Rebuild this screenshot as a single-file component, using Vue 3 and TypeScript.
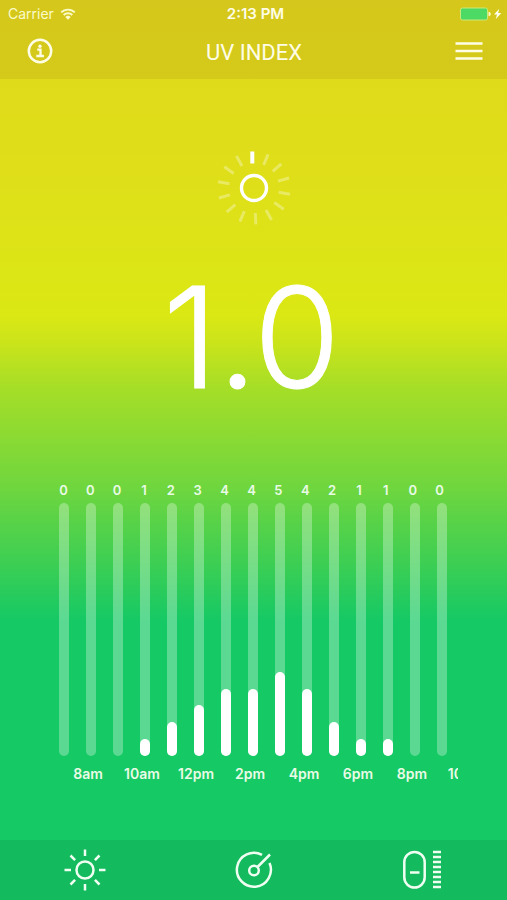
<script setup lang="ts">
interface Ray {
  angle: number
  active: boolean
}

const values: number[] = [0, 0, 0, 1, 2, 3, 4, 4, 5, 4, 2, 1, 1, 0, 0]
const hours: string[] = ['8am', '10am', '12pm', '2pm', '4pm', '6pm', '8pm', '10pm']
const maxIndex = 15

const rays: Ray[] = Array.from({ length: 14 }, (_, i) => ({
  angle: i === 0 ? 0 : -3 + (i * 360) / 14,
  active: i === 0,
}))

const sunAngles: number[] = [0, 45, 90, 135, 180, 225, 270, 315]
const scaleMarks: number[] = Array.from({ length: 8 }, (_, i) => 2 + i * 5)

function fillHeight(value: number): string {
  return `${(value / maxIndex) * 100}%`
}
</script>

<template>
  <div class="screen">
    <header class="top">
      <div class="status">
        <div class="carrier">
          <span>Carrier</span>
          <svg width="16" height="12" viewBox="0 0 16 12" aria-hidden="true">
            <g fill="none" stroke="currentColor" stroke-width="1.9">
              <path d="M1.2 4.4a9.6 9.6 0 0 1 13.6 0" />
              <path d="M3.7 7a6.1 6.1 0 0 1 8.6 0" />
            </g>
            <path d="M8 11.8 5.3 9.1a3.8 3.8 0 0 1 5.4 0z" fill="currentColor" />
          </svg>
        </div>
        <span class="time">2:13 PM</span>
        <svg class="battery" width="44" height="14" viewBox="0 0 44 14" aria-hidden="true">
          <rect x="1.5" y="1" width="27" height="12" rx="2" fill="#4cd964" stroke="#c9ea78" />
          <path d="M29.5 4.8v4.4q2.4-.4 2.400-2.200t-2.400-2.200z" fill="#fbfbc9" />
          <path d="M40.3 1.8 35 7.600h3L36.700 12.200l5.600-6.200h-3.200z" fill="#fffff0" />
        </svg>
      </div>
      <nav class="bar">
        <button type="button" aria-label="Information">
          <svg width="26" height="26" viewBox="0 0 26 26" aria-hidden="true">
            <circle cx="13" cy="13" r="11.2" fill="none" stroke="currentColor" stroke-width="2.5" />
            <circle cx="13" cy="8.2" r="1.7" fill="currentColor" />
            <path d="M10.3 11.700h3.200v6M9.300 18h7.600" fill="none" stroke="currentColor" stroke-width="2.3" />
          </svg>
        </button>
        <h1>UV INDEX</h1>
        <button type="button" aria-label="Menu">
          <svg width="28" height="20" viewBox="0 0 28 20" aria-hidden="true">
            <path d="M.5 2.500h27M.5 10h27M.5 17.500h27" stroke="currentColor" stroke-width="2.7" />
          </svg>
        </button>
      </nav>
    </header>

    <main>
      <section class="current">
        <svg width="76" height="76" viewBox="0 0 76 76" aria-hidden="true">
          <circle cx="38" cy="38" r="12.5" fill="none" stroke="#fff" stroke-width="3.4" />
          <path
            v-for="ray in rays"
            :key="ray.angle"
            :class="['ray', { active: ray.active }]"
            :d="ray.active ? 'M36.3 13.5V1.5' : 'M38 13V1.5'"
            :transform="`rotate(${ray.angle} 38 38)`"
          />
        </svg>
        <p class="reading">1.0</p>
      </section>

      <section class="chart" aria-label="UV index by hour">
        <div class="values">
          <span v-for="(value, i) in values" :key="i">{{ value }}</span>
        </div>
        <div class="tracks">
          <div v-for="(value, i) in values" :key="i" class="track">
            <div class="fill" :style="{ height: fillHeight(value) }"></div>
          </div>
        </div>
        <div class="hours">
          <span v-for="hour in hours" :key="hour">{{ hour }}</span>
        </div>
      </section>
    </main>

    <footer class="tabs">
      <button type="button" aria-label="UV index">
        <svg width="42" height="42" viewBox="0 0 42 42" aria-hidden="true">
          <circle cx="21" cy="21" r="8.5" />
          <path v-for="angle in sunAngles" :key="angle" d="M21 7V.5" :transform="`rotate(${angle} 21 21)`" />
        </svg>
      </button>
      <button type="button" aria-label="Exposure">
        <svg width="38" height="38" viewBox="0 0 38 38" aria-hidden="true">
          <path d="M27 3.800A17 17 0 1 0 34.500 12" />
          <circle cx="19" cy="19.5" r="4.8" />
          <path d="M22.5 16 35 3.5" />
        </svg>
      </button>
      <button type="button" aria-label="Device">
        <svg width="42" height="40" viewBox="0 0 42 40" aria-hidden="true">
          <rect x="2.3" y="2" width="20.4" height="35.5" rx="10.2" />
          <path d="M8 22.5h9.5" />
          <path v-for="y in scaleMarks" :key="y" :d="`M31 ${y}h8`" />
        </svg>
      </button>
    </footer>
  </div>
</template>

<style>
body {
  margin: 0;
}
</style>

<style scoped>
.screen {
  display: flex;
  flex-direction: column;
  min-height: 100vh;
  overflow: hidden;
  color: #fff;
  font-family: Inter, "Liberation Sans", sans-serif;
  background: linear-gradient(
    180deg,
    #e0d61c 0%,
    #dfdf19 20%,
    #dbe814 35%,
    #cbe41a 38%,
    #a6de27 43%,
    #70d63e 54%,
    #40cf52 62%,
    #15c965 69%,
    #15c965 100%
  );
}

button {
  display: flex;
  align-items: center;
  justify-content: center;
  margin: 0;
  padding: 0;
  border: 0;
  background: none;
  color: inherit;
}

.top {
  background: rgba(120, 70, 20, 0.1);
  color: #fffde6;
}

.status {
  display: grid;
  grid-template-columns: 1fr auto 1fr;
  align-items: center;
  height: 27px;
  padding: 0 4px 0 8px;
  font-size: 14px;
}

.carrier {
  display: flex;
  align-items: center;
  gap: 6px;
  color: #fbfbc9;
}

.time {
  font-size: 15px;
  font-weight: 600;
}

.battery {
  justify-self: end;
}

.bar {
  display: flex;
  align-items: center;
  justify-content: space-between;
  height: 52px;
  padding: 0 24px 4px 27px;
  box-sizing: border-box;
}

h1 {
  margin: 0;
  padding-top: 3px;
  font-family: Roboto, sans-serif;
  font-size: 22px;
  font-weight: 400;
  line-height: 28px;
}

main {
  display: flex;
  flex: 1;
  flex-direction: column;
}

.current {
  display: flex;
  flex-direction: column;
  align-items: center;
  padding-top: 71px;
}

.ray {
  fill: none;
  stroke: rgba(255, 255, 255, 0.32);
  stroke-width: 3px;
}

.ray.active {
  stroke: #fff;
  stroke-width: 4px;
}

.reading {
  margin: 40px 0 0;
  padding-right: 4px;
  font-size: 140px;
  font-weight: 300;
  line-height: 142px;
  -webkit-text-stroke: 1px #fff;
}

.chart {
  margin: 74px 49px 0;
  overflow: hidden;
  color: #e9fbe6;
  font-size: 13px;
  font-weight: 600;
  line-height: 16px;
}

.values,
.tracks {
  display: grid;
  grid-template-columns: repeat(15, 1fr);
}

.values {
  padding: 0 5px 0 1px;
  text-align: center;
}

.tracks {
  height: 253px;
  margin-top: 5px;
  padding: 0 3px 0 2px;
  justify-items: center;
}

.track {
  display: flex;
  align-items: flex-end;
  width: 10px;
  border-radius: 5px;
  background: rgba(255, 255, 255, 0.3);
}

.fill {
  width: 100%;
  border-radius: 5px;
  background: #fff;
}

.hours {
  display: flex;
  margin: 10px 6px 0 12px;
  font-size: 14px;
}

.hours span {
  flex: 0 0 54px;
  text-align: center;
}

.tabs {
  display: grid;
  grid-template-columns: repeat(3, 1fr);
  height: 60px;
  background: rgba(20, 130, 70, 0.2);
  color: #effff2;
}

.tabs svg {
  fill: none;
  stroke: currentColor;
  stroke-width: 2.5px;
}
</style>
